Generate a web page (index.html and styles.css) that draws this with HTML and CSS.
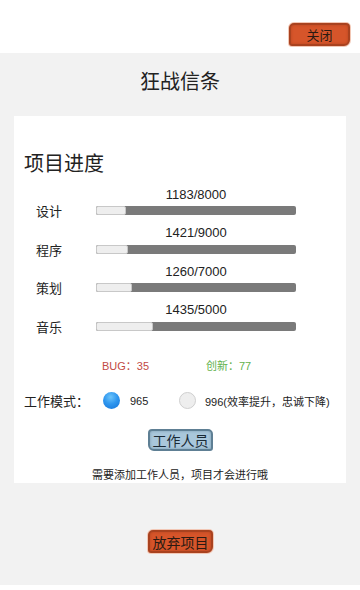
FILE: index.html
```html
<!DOCTYPE html>
<html lang="zh">
<head>
<meta charset="utf-8">
<title>狂战信条</title>
<link rel="stylesheet" href="styles.css">
</head>
<body>
<div class="top">
  <button class="brush brush-orange close">关闭</button>
</div>
<main class="panel">
  <h1 class="title">狂战信条</h1>
  <section class="card">
    <h2 class="heading">项目进度</h2>
    <div class="rows">
      <div class="row">
        <div class="value">1183/8000</div>
        <div class="line"><span class="label">设计</span><div class="bar"><div class="fill" style="width:14.8%"></div></div></div>
      </div>
      <div class="row">
        <div class="value">1421/9000</div>
        <div class="line"><span class="label">程序</span><div class="bar"><div class="fill" style="width:15.8%"></div></div></div>
      </div>
      <div class="row">
        <div class="value">1260/7000</div>
        <div class="line"><span class="label">策划</span><div class="bar"><div class="fill" style="width:18%"></div></div></div>
      </div>
      <div class="row">
        <div class="value">1435/5000</div>
        <div class="line"><span class="label">音乐</span><div class="bar"><div class="fill" style="width:28.7%"></div></div></div>
      </div>
    </div>
    <div class="stats">
      <span class="bug">BUG：35</span>
      <span class="inno">创新：77</span>
    </div>
    <div class="mode">
      <span class="mode-label">工作模式：</span>
      <span class="radio on"></span><span class="opt opt1">965</span>
      <span class="radio"></span><span class="opt">996(效率提升，忠诚下降)</span>
    </div>
    <div class="staff-wrap"><button class="brush brush-blue staff">工作人员</button></div>
    <p class="note">需要添加工作人员，项目才会进行哦</p>
  </section>
  <div class="quit-wrap"><button class="brush brush-orange quit">放弃项目</button></div>
</main>
</body>
</html>
```
FILE: styles.css
```css
* { box-sizing: border-box; }
html, body { margin: 0; padding: 0; background: #fff; }
body {
  width: 360px;
  height: 590px;
  font-family: "Liberation Sans", "Noto Sans CJK SC", sans-serif;
  color: #222;
  overflow: hidden;
}
.top {
  height: 53px;
  display: flex;
  justify-content: flex-end;
  padding: 23px 10px 0 0;
}
.brush {
  font-family: "Noto Sans CJK SC", sans-serif;
  padding: 0;
  display: flex;
  align-items: center;
  justify-content: center;
  color: #2b1a12;
  cursor: pointer;
}
.brush-orange {
  background: #d6552a;
  border: 2px solid #a9421f;
  border-radius: 5px 4px 6px 3px;
  box-shadow: 0 0 0 1px #f2c7b5, inset 0 0 3px #b8461f;
}
.brush-blue {
  background: #a9c7db;
  border: 2px solid #5e7f94;
  border-radius: 4px 5px 3px 6px;
  box-shadow: inset 0 0 3px #7a9bb0;
  color: #1a2a36;
}
.close {
  width: 61px;
  height: 23px;
  font-size: 13px;
}
.panel {
  background: #f2f2f2;
  height: 532px;
  padding: 14px 14px 0;
}
.title {
  margin: 0;
  font-family: "Noto Sans CJK SC", sans-serif;
  font-weight: 400;
  font-size: 20px;
  line-height: 28px;
  text-align: center;
  color: #222;
}
.card {
  margin-top: 21px;
  background: #fff;
  height: 367px;
  padding: 33px 0 0 10px;
}
.heading {
  margin: 0;
  font-family: "Noto Sans CJK SC", sans-serif;
  font-weight: 400;
  font-size: 20px;
  line-height: 28px;
  color: #222;
}
.rows { margin-top: 9.5px; }
.row { margin-bottom: 6.5px; }
.value {
  margin-left: 72px;
  width: 200px;
  text-align: center;
  font-size: 13px;
  line-height: 16px;
  color: #222;
}
.line {
  display: flex;
  align-items: center;
  height: 16px;
}
.label {
  width: 72px;
  padding-left: 12px;
  font-family: "Noto Sans CJK SC", sans-serif;
  font-size: 13px;
  color: #222;
}
.bar {
  width: 200px;
  height: 9px;
  background: #7a7a7a;
  border-radius: 2px;
  overflow: hidden;
  display: flex;
}
.fill {
  height: 100%;
  background: #eeeeee;
  border: 1px solid #c8c8c8;
  border-radius: 2px;
}
.stats {
  margin-top: 22.5px;
  height: 16px;
  display: flex;
  align-items: center;
  font-size: 11px;
  padding-left: 78px;
}
.bug { color: #c24a44; width: 104px; }
.inno { color: #63b24e; }
.mode {
  margin-top: 18px;
  height: 20px;
  display: flex;
  align-items: center;
}
.mode-label {
  width: 79px;
  font-family: "Noto Sans CJK SC", sans-serif;
  font-size: 13px;
  color: #222;
}
.radio {
  width: 17px;
  height: 17px;
  border-radius: 50%;
  background: #eeeeee;
  border: 1px solid #cfcfcf;
  margin-right: 9px;
}
.radio.on {
  border: none;
  background: radial-gradient(circle at 45% 30%, #6cc4fa 0%, #2f97ef 45%, #1272d8 100%);
  margin-right: 10px;
}
.opt {
  font-size: 11px;
  color: #222;
}
.opt1 { width: 49px; }
.staff-wrap {
  margin-top: 18px;
  padding-left: 124px;
}
.staff {
  width: 65px;
  height: 22px;
  font-size: 14px;
}
.note {
  margin: 15px 0 0 -10px;
  font-family: "Noto Sans CJK SC", sans-serif;
  font-size: 11px;
  line-height: 16px;
  text-align: center;
  color: #222;
}
.quit-wrap {
  margin-top: 47px;
  display: flex;
  padding-left: 134px;
}
.quit {
  width: 65px;
  height: 23px;
  font-size: 14px;
}
```
